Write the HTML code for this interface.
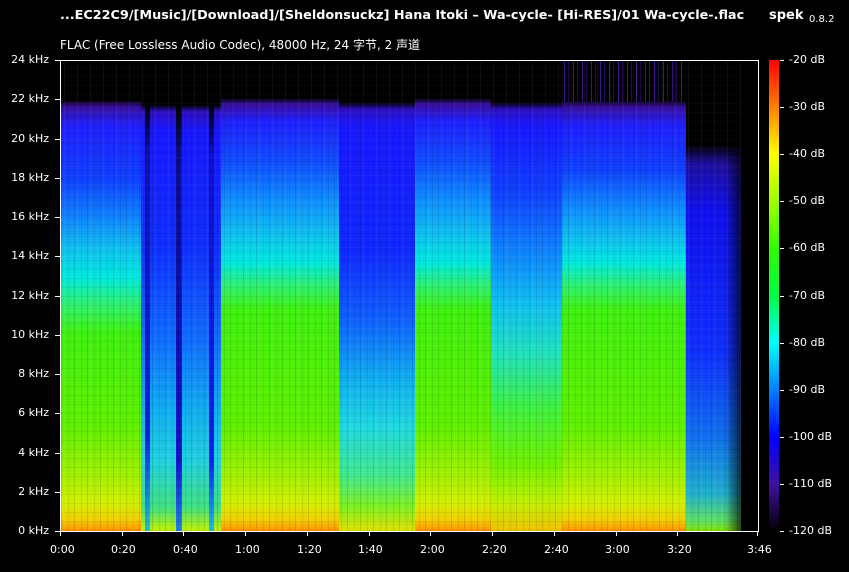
<!DOCTYPE html>
<html><head><meta charset="utf-8"><style>
html,body{margin:0;padding:0;background:#000;}
body{width:849px;height:572px;position:relative;overflow:hidden;font-family:"DejaVu Sans","Liberation Sans","Noto Sans CJK SC",sans-serif;color:#fff;}
.a{position:absolute;}
.t{font-size:11px;white-space:nowrap;}
.sec{position:absolute;top:60px;height:471px;}
.tex{position:absolute;top:60px;height:471px;left:61px;width:680px;
background:repeating-linear-gradient(90deg,rgba(0,0,0,0.12) 0 1px,transparent 1px 3px,rgba(255,255,255,0.05) 3px 4px,transparent 4px 7px,rgba(0,0,0,0.08) 7px 8px,transparent 8px 13px);}
.htex{position:absolute;top:60px;height:471px;left:61px;width:680px;
background:repeating-linear-gradient(0deg,rgba(0,0,0,0.06) 0 1px,transparent 1px 4px,rgba(255,255,255,0.03) 4px 5px,transparent 5px 9px);}
</style></head><body>
<div class="a" style="left:60px;top:8px;font-size:12.8px;font-weight:bold;white-space:nowrap;">...EC22C9/[Music]/[Download]/[Sheldonsuckz] Hana Itoki – Wa-cycle- [Hi-RES]/01 Wa-cycle-.flac</div>
<div class="a" style="left:769px;top:8px;font-size:13px;font-weight:bold;">spek</div>
<div class="a" style="left:809px;top:14px;font-size:10px;">0.8.2</div>
<div class="a" style="left:60px;top:36px;font-size:12px;white-space:nowrap;">FLAC (Free Lossless Audio Codec), 48000 Hz, 24 字节, 2 声道</div>

<div class="sec" style="left:61px;width:80px;background:linear-gradient(#000 0,#000 8.5%,#3a10a0 10%,#2020ff 14%,#1040ff 25%,#1080ff 33%,#10c0f0 40%,#00e8e0 46%,#30f070 52%,#40f010 58%,#60f000 78%,#a0f000 88%,#d0f000 94%,#f0d000 97.5%,#ff9000 100%);"></div>
<div class="sec" style="left:141px;width:80px;background:linear-gradient(#000 0,#000 9.5%,#3010c0 11%,#1818ff 15%,#1030ff 40%,#1070ff 60%,#10b0f0 75%,#20d0e0 85%,#40e080 95%,#c0f000 100%);"></div>
<div class="sec" style="left:145px;width:5px;background:linear-gradient(#000 10%,#1010b0 20%,#1020e0 80%,#20c0e0 100%);"></div>
<div class="sec" style="left:176px;width:6px;background:linear-gradient(#000 10%,#0c0c90 20%,#1010d0 85%,#2080f0 100%);"></div>
<div class="sec" style="left:209px;width:5px;background:linear-gradient(#000 10%,#1010c0 20%,#1020f0 85%,#20c0f0 100%);"></div>
<div class="sec" style="left:221px;width:118px;background:linear-gradient(#000 0,#000 8%,#3a10a0 9.5%,#2020ff 13%,#1050ff 22%,#1090ff 30%,#10c0f0 37%,#00e8e0 43%,#30f070 48%,#40f010 53%,#60f000 78%,#a0f000 88%,#d0f000 94%,#f0d000 97.5%,#ff9000 100%);"></div>
<div class="sec" style="left:339px;width:76px;background:linear-gradient(#000 0,#000 9%,#3010c0 10.5%,#1818ff 14%,#1028ff 40%,#1060ff 55%,#10b0f0 68%,#20d8e0 78%,#40e890 88%,#80f020 95%,#e0e000 100%);"></div>
<div class="sec" style="left:415px;width:76px;background:linear-gradient(#000 0,#000 8%,#3a10a0 9.5%,#2020ff 13%,#1050ff 22%,#1090ff 30%,#10c0f0 37%,#00e8e0 43%,#30f070 48%,#40f010 53%,#60f000 78%,#a0f000 88%,#d0f000 94%,#f0d000 97.5%,#ff9000 100%);"></div>
<div class="sec" style="left:491px;width:71px;background:linear-gradient(#000 0,#000 9%,#3010c0 10.5%,#1818ff 14%,#1040ff 28%,#1080ff 40%,#10c0f0 52%,#20e0c0 62%,#40f040 74%,#70f000 86%,#c0f000 94%,#f0c000 100%);"></div>
<div class="sec" style="left:562px;width:124px;background:linear-gradient(#000 0,#000 8.5%,#3a10a0 10%,#2020ff 14%,#1040ff 23%,#1090ff 32%,#10c0f0 38%,#00e8e0 43%,#30f070 48%,#40f010 53%,#60f000 78%,#a0f000 88%,#d0f000 94%,#f0d000 97.5%,#ff9000 100%);"></div>
<div class="a" style="left:564px;top:60px;width:118px;height:42px;background:repeating-linear-gradient(90deg,rgba(90,30,200,0.7) 0 1px,transparent 1px 4px,rgba(60,20,160,0.5) 4px 5px,transparent 5px 9px);"></div>
<div class="sec" style="left:686px;width:55px;background:linear-gradient(90deg,transparent 0,transparent 70%,rgba(0,0,0,0.7) 100%),linear-gradient(#000 0,#000 18%,#2010a0 22%,#1010f0 32%,#1030ff 62%,#1070f0 80%,#20b0d0 92%,#60e060 98%,#80e000 100%);"></div>
<div class="tex"></div>
<div class="htex"></div>

<div class="a" style="left:60px;top:60px;width:697px;height:470px;border:1px solid #fff;"></div>

<div class="a t" style="right:800px;top:53px;">24 kHz</div>
<div class="a t" style="right:800px;top:92px;">22 kHz</div>
<div class="a t" style="right:800px;top:132px;">20 kHz</div>
<div class="a t" style="right:800px;top:171px;">18 kHz</div>
<div class="a t" style="right:800px;top:210px;">16 kHz</div>
<div class="a t" style="right:800px;top:249px;">14 kHz</div>
<div class="a t" style="right:800px;top:289px;">12 kHz</div>
<div class="a t" style="right:800px;top:328px;">10 kHz</div>
<div class="a t" style="right:800px;top:367px;">8 kHz</div>
<div class="a t" style="right:800px;top:406px;">6 kHz</div>
<div class="a t" style="right:800px;top:446px;">4 kHz</div>
<div class="a t" style="right:800px;top:485px;">2 kHz</div>
<div class="a t" style="right:800px;top:524px;">0 kHz</div>
<svg class="a" style="left:0;top:0" width="849" height="572">
<g stroke="#fff" stroke-width="1">
<path d="M55 60.5h5M55 99.5h5M55 139.5h5M55 178.5h5M55 217.5h5M55 256.5h5M55 296.5h5M55 335.5h5M55 374.5h5M55 413.5h5M55 453.5h5M55 492.5h5M55 531.5h5"/>
<path d="M60.5 531v5M122.5 531v5M183.5 531v5M245.5 531v5M307.5 531v5M369.5 531v5M430.5 531v5M492.5 531v5M554.5 531v5M616.5 531v5M677.5 531v5M757.5 531v5"/>
<path d="M780 60.5h4M780 107.5h4M780 154.5h4M780 201.5h4M780 248.5h4M780 296.5h4M780 343.5h4M780 390.5h4M780 437.5h4M780 484.5h4M780 531.5h4"/>
</g></svg>
<div class="a t" style="left:50px;top:543px;">0:00</div>
<div class="a t" style="left:111px;top:543px;">0:20</div>
<div class="a t" style="left:173px;top:543px;">0:40</div>
<div class="a t" style="left:235px;top:543px;">1:00</div>
<div class="a t" style="left:297px;top:543px;">1:20</div>
<div class="a t" style="left:358px;top:543px;">1:40</div>
<div class="a t" style="left:420px;top:543px;">2:00</div>
<div class="a t" style="left:482px;top:543px;">2:20</div>
<div class="a t" style="left:544px;top:543px;">2:40</div>
<div class="a t" style="left:605px;top:543px;">3:00</div>
<div class="a t" style="left:667px;top:543px;">3:20</div>
<div class="a t" style="left:747px;top:543px;">3:46</div>

<div class="a" style="left:769px;top:60px;width:10px;height:471px;background:linear-gradient(#ff0000 0%,#ff8000 10%,#ffff00 20%,#a0ff00 30%,#30ff00 40%,#00ff40 50%,#00ffff 60%,#0080ff 70%,#0000ff 80%,#4010a0 90%,#000 100%);"></div>
<div class="a t" style="left:789px;top:53px;">-20 dB</div>
<div class="a t" style="left:789px;top:100px;">-30 dB</div>
<div class="a t" style="left:789px;top:147px;">-40 dB</div>
<div class="a t" style="left:789px;top:194px;">-50 dB</div>
<div class="a t" style="left:789px;top:241px;">-60 dB</div>
<div class="a t" style="left:789px;top:289px;">-70 dB</div>
<div class="a t" style="left:789px;top:336px;">-80 dB</div>
<div class="a t" style="left:789px;top:383px;">-90 dB</div>
<div class="a t" style="left:789px;top:430px;">-100 dB</div>
<div class="a t" style="left:789px;top:477px;">-110 dB</div>
<div class="a t" style="left:789px;top:524px;">-120 dB</div>
</body></html>
